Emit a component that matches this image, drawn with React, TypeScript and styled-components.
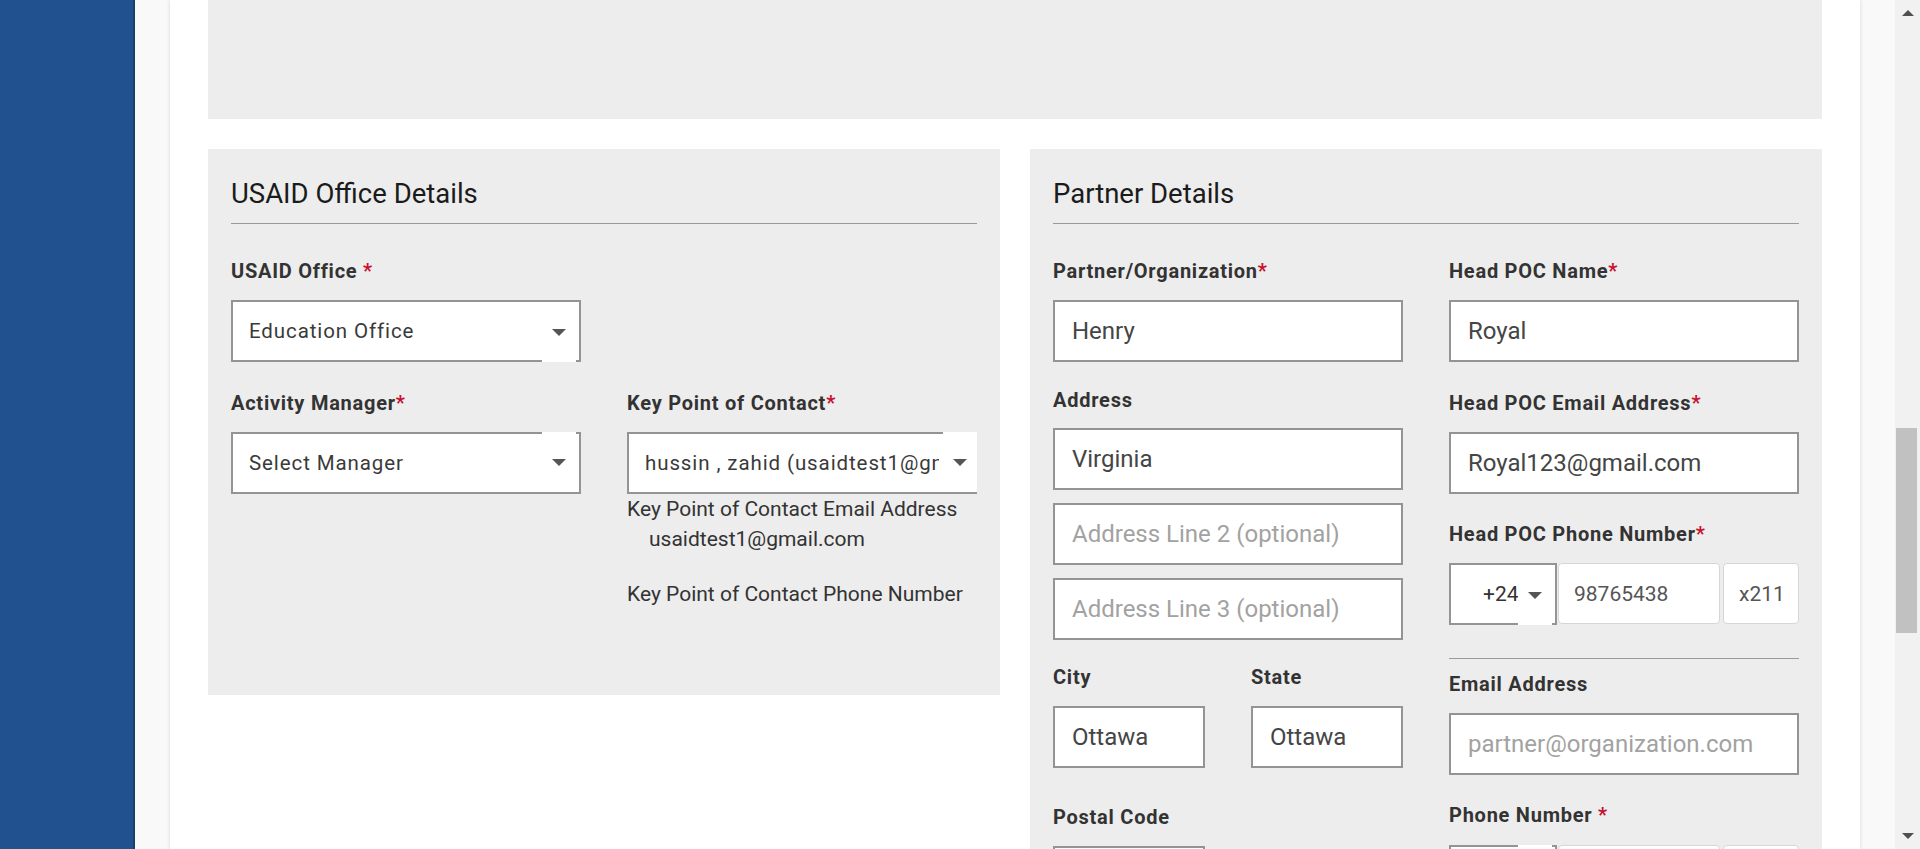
import React from "react";
import styled, { createGlobalStyle } from "styled-components";

const GlobalStyle = createGlobalStyle`
  html, body { margin: 0; padding: 0; overflow: hidden; background: #f9f9f9; }
  body { font-family: Roboto, "Liberation Sans", Arial, sans-serif; }
  * { box-sizing: border-box; }
`;

const Page = styled.div`
  display: flex;
  height: 849px;
  width: 1920px;
  overflow: hidden;
`;

const Sidebar = styled.aside`
  width: 135px;
  flex: 0 0 135px;
  background: #21528f;
  border-right: 2px solid #173f6d;
`;

const Main = styled.main`
  flex: 1;
  background: #f9f9f9;
  padding: 0 35px;
  overflow: hidden;
`;

const Card = styled.div`
  background: #ffffff;
  height: 100%;
  padding: 0 38px;
  box-shadow: 0 0 4px rgba(0, 0, 0, 0.14);
  overflow: hidden;
`;

const TopPanel = styled.div`
  height: 119px;
  background: #ededed;
  margin-bottom: 30px;
`;

const PanelsRow = styled.div`
  display: grid;
  grid-template-columns: 1fr 1fr;
  column-gap: 30px;
  align-items: start;
`;

const Panel = styled.section<{ $pb?: number }>`
  background: #ededed;
  padding: 29px 23px ${(p) => p.$pb ?? 0}px;
`;

const PanelTitle = styled.h2`
  margin: 0 0 13px;
  font-size: 27.5px;
  line-height: 32px;
  font-weight: 400;
  color: #1b1b1b;
`;

const Rule = styled.hr<{ $mt?: number; $mb?: number }>`
  border: 0;
  border-top: 1px solid #9a9a9a;
  margin: ${(p) => p.$mt ?? 0}px 0 ${(p) => p.$mb ?? 0}px;
  height: 0;
`;

const FieldGrid = styled.div`
  display: grid;
  grid-template-columns: 1fr 1fr;
  column-gap: 46px;
  align-items: start;
`;

const Column = styled.div`
  display: flex;
  flex-direction: column;
  min-width: 0;
`;

const Field = styled.div<{ $mt?: number }>`
  display: flex;
  flex-direction: column;
  margin-top: ${(p) => p.$mt ?? 0}px;
  min-width: 0;
`;

const Label = styled.label<{ $mb?: number }>`
  font-size: 20px;
  line-height: 24px;
  font-weight: 700;
  letter-spacing: 0.75px;
  color: #333333;
  margin-bottom: ${(p) => p.$mb ?? 17}px;
  white-space: nowrap;
`;

const Req = styled.span`
  color: #c8102e;
`;

const TextInput = styled.input`
  display: block;
  width: 100%;
  height: 62px;
  border: 2px solid #949494;
  border-radius: 0;
  background: #ffffff;
  padding: 0 17px;
  font-family: Roboto, "Liberation Sans", Arial, sans-serif;
  font-size: 24px;
  color: #454545;
  outline: none;
  &::placeholder {
    color: #a2a2a2;
  }
`;

const Stack = styled.div`
  display: flex;
  flex-direction: column;
  gap: 13px;
`;

const SelectBox = styled.div`
  position: relative;
  height: 62px;
  border: 2px solid #949494;
  background: #ffffff;
  display: flex;
  align-items: center;
  padding: 0 36px 0 16px;
`;

const SelectText = styled.span`
  font-size: 20.5px;
  letter-spacing: 0.9px;
  color: #3a3a3a;
  white-space: nowrap;
  overflow: hidden;
`;

const ArrowBox = styled.span<{ $notch: "top" | "bottom"; $right?: number }>`
  position: absolute;
  right: ${(p) => p.$right ?? 3}px;
  width: 34px;
  top: ${(p) => (p.$notch === "top" ? "-2px" : "0")};
  bottom: ${(p) => (p.$notch === "bottom" ? "-2px" : "0")};
  background: #ffffff;
  display: flex;
  align-items: center;
  justify-content: center;
`;

const Caret = styled.span`
  width: 0;
  height: 0;
  border-left: 7px solid transparent;
  border-right: 7px solid transparent;
  border-top: 7px solid #555555;
`;

const InfoText = styled.p<{ $mt?: number; $indent?: number }>`
  margin: ${(p) => p.$mt ?? 0}px 0 0 ${(p) => p.$indent ?? 0}px;
  font-size: 21px;
  line-height: 24px;
  color: #333333;
  white-space: nowrap;
`;

const PairGrid = styled.div`
  display: grid;
  grid-template-columns: 1fr 1fr;
  column-gap: 46px;
`;

const PhoneRow = styled.div`
  display: flex;
  height: 62px;
`;

const CountrySelect = styled.div`
  position: relative;
  width: 108px;
  flex: 0 0 108px;
  border: 2px solid #949494;
  background: #ffffff;
  display: flex;
  align-items: center;
  padding-left: 32px;
  font-size: 21px;
  color: #333333;
`;

const PhoneInput = styled.input<{ $ml: number }>`
  display: block;
  min-width: 0;
  height: 61px;
  margin-left: ${(p) => p.$ml}px;
  border: 1px solid #d6d6d6;
  border-radius: 4px;
  background: #ffffff;
  padding: 0 15px;
  font-family: Roboto, "Liberation Sans", Arial, sans-serif;
  font-size: 21px;
  color: #555555;
  outline: none;
`;

const PhoneMain = styled(PhoneInput)`
  flex: 1;
`;

const PhoneExt = styled(PhoneInput)`
  width: 76px;
  flex: 0 0 76px;
`;

const HalfInput = styled(TextInput)`
  width: 152px;
`;

const ScrollTrack = styled.div`
  width: 25px;
  flex: 0 0 25px;
  background: #f1f1f1;
  display: flex;
  flex-direction: column;
  align-items: center;
`;

const ScrollButton = styled.div`
  height: 26px;
  width: 100%;
  display: flex;
  align-items: center;
  justify-content: center;
`;

const ArrowUp = styled.span`
  width: 0;
  height: 0;
  border-left: 6px solid transparent;
  border-right: 6px solid transparent;
  border-bottom: 6px solid #505050;
`;

const ArrowDown = styled.span`
  width: 0;
  height: 0;
  border-left: 6px solid transparent;
  border-right: 6px solid transparent;
  border-top: 6px solid #505050;
`;

const ScrollSpace = styled.div`
  flex: 1;
  width: 100%;
  display: flex;
  flex-direction: column;
  align-items: center;
`;

const ScrollThumb = styled.div<{ $top: number; $height: number }>`
  margin-top: ${(p) => p.$top}px;
  width: 21px;
  height: ${(p) => p.$height}px;
  background: #c1c1c1;
  margin-left: -2px;
`;

const PhoneField: React.FC<{ notch: "top" | "bottom"; code: string; num: string; ext: string }> = ({
  notch,
  code,
  num,
  ext,
}) => (
  <PhoneRow>
    <CountrySelect>
      {code}
      <ArrowBox $notch={notch} $right={3}>
        <Caret />
      </ArrowBox>
    </CountrySelect>
    <PhoneMain $ml={1} readOnly defaultValue={num} />
    <PhoneExt $ml={3} readOnly defaultValue={ext} />
  </PhoneRow>
);

export default function App() {
  return (
    <>
      <GlobalStyle />
      <Page>
        <Sidebar />
        <Main>
          <Card>
            <TopPanel />
            <PanelsRow>
              <Panel $pb={89}>
                <PanelTitle>USAID Office Details</PanelTitle>
                <Rule $mb={35} />
                <FieldGrid>
                  <Column>
                    <Field>
                      <Label $mb={17}>
                        USAID Office <Req>*</Req>
                      </Label>
                      <SelectBox>
                        <SelectText>Education Office</SelectText>
                        <ArrowBox $notch="bottom">
                          <Caret />
                        </ArrowBox>
                      </SelectBox>
                    </Field>
                  </Column>
                  <Column />
                  <Column>
                    <Field $mt={29}>
                      <Label>
                        Activity Manager<Req>*</Req>
                      </Label>
                      <SelectBox>
                        <SelectText>Select Manager</SelectText>
                        <ArrowBox $notch="top">
                          <Caret />
                        </ArrowBox>
                      </SelectBox>
                    </Field>
                  </Column>
                  <Column>
                    <Field $mt={29}>
                      <Label>
                        Key Point of Contact<Req>*</Req>
                      </Label>
                      <SelectBox>
                        <SelectText>hussin , zahid (usaidtest1@gmail.com)</SelectText>
                        <ArrowBox $notch="top" $right={-2}>
                          <Caret />
                        </ArrowBox>
                      </SelectBox>
                      <InfoText $mt={3}>Key Point of Contact Email Address</InfoText>
                      <InfoText $mt={6} $indent={22}>
                        usaidtest1@gmail.com
                      </InfoText>
                      <InfoText $mt={31}>Key Point of Contact Phone Number</InfoText>
                    </Field>
                  </Column>
                </FieldGrid>
              </Panel>

              <Panel $pb={40}>
                <PanelTitle>Partner Details</PanelTitle>
                <Rule $mb={35} />
                <FieldGrid>
                  <Column>
                    <Field>
                      <Label $mb={17}>
                        Partner/Organization<Req>*</Req>
                      </Label>
                      <TextInput readOnly defaultValue="Henry" />
                    </Field>
                    <Field $mt={26}>
                      <Label $mb={16}>Address</Label>
                      <Stack>
                        <TextInput readOnly defaultValue="Virginia" />
                        <TextInput readOnly placeholder="Address Line 2 (optional)" />
                        <TextInput readOnly placeholder="Address Line 3 (optional)" />
                      </Stack>
                    </Field>
                    <PairGrid>
                      <Field $mt={25}>
                        <Label>City</Label>
                        <TextInput readOnly defaultValue="Ottawa" />
                      </Field>
                      <Field $mt={25}>
                        <Label>State</Label>
                        <TextInput readOnly defaultValue="Ottawa" />
                      </Field>
                    </PairGrid>
                    <Field $mt={37}>
                      <Label>Postal Code</Label>
                      <HalfInput readOnly defaultValue="" />
                    </Field>
                  </Column>
                  <Column>
                    <Field>
                      <Label $mb={17}>
                        Head POC Name<Req>*</Req>
                      </Label>
                      <TextInput readOnly defaultValue="Royal" />
                    </Field>
                    <Field $mt={29}>
                      <Label>
                        Head POC Email Address<Req>*</Req>
                      </Label>
                      <TextInput readOnly defaultValue="Royal123@gmail.com" />
                    </Field>
                    <Field $mt={28}>
                      <Label>
                        Head POC Phone Number<Req>*</Req>
                      </Label>
                      <PhoneField notch="bottom" code="+24" num="98765438" ext="x211" />
                    </Field>
                    <Rule $mt={33} />
                    <Field $mt={13}>
                      <Label>Email Address</Label>
                      <TextInput readOnly placeholder="partner@organization.com" />
                    </Field>
                    <Field $mt={28}>
                      <Label $mb={18}>
                        Phone Number <Req>*</Req>
                      </Label>
                      <PhoneField notch="top" code="+1" num="" ext="" />
                    </Field>
                  </Column>
                </FieldGrid>
              </Panel>
            </PanelsRow>
          </Card>
        </Main>
        <ScrollTrack>
          <ScrollButton>
            <ArrowUp />
          </ScrollButton>
          <ScrollSpace>
            <ScrollThumb $top={402} $height={205} />
          </ScrollSpace>
          <ScrollButton>
            <ArrowDown />
          </ScrollButton>
        </ScrollTrack>
      </Page>
    </>
  );
}
